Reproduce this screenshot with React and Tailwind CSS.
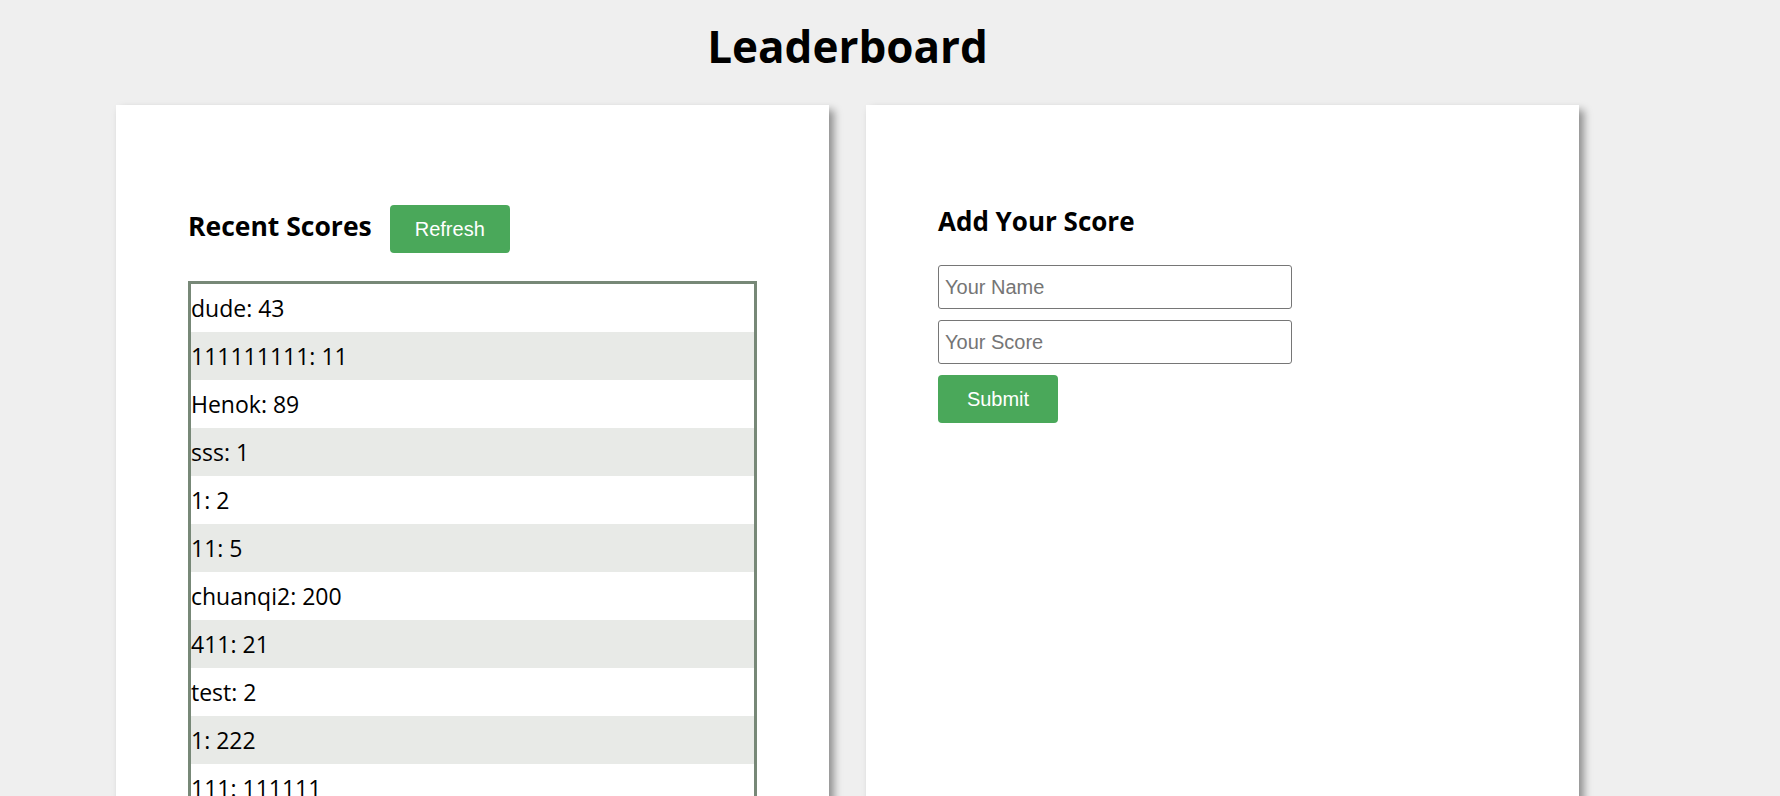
import React from 'react';

const scores = [
    { name: 'dude', score: 43 },
    { name: '111111111', score: 11 },
    { name: 'Henok', score: 89 },
    { name: 'sss', score: 1 },
    { name: '1', score: 2 },
    { name: '11', score: 5 },
    { name: 'chuanqi2', score: 200 },
    { name: '411', score: 21 },
    { name: 'test', score: 2 },
    { name: '1', score: 222 },
    { name: '111', score: 111111 },
];

export default function App() {
    return (
        <div className="min-h-screen bg-[#efefef] text-black font-['Open_Sans',sans-serif] overflow-hidden">
            <div className="ml-[116px] w-[1463px]">
                {/* Title */}
                <h1 className="text-center text-[44px] font-bold leading-[56px] pt-[18px] pb-[31px]">Leaderboard</h1>

                <div className="flex gap-[37px] items-stretch">
                    {/* Recent scores */}
                    <div className="w-[713px] bg-white px-[72px] pt-[100px] pb-10 shadow-[5px_5px_8px_rgba(0,0,0,0.4)]">
                        <div className="flex items-center gap-[18px]">
                            <h2 className="text-[26.5px] font-bold leading-none mb-[5px]">Recent Scores</h2>
                            <button className="h-[48px] w-[120px] rounded-[4px] bg-[#4aa85a] text-white text-[20px] font-['Liberation_Sans',Arial,sans-serif]">
                                Refresh
                            </button>
                        </div>

                        <ul className="mt-[28px] border-[3px] border-[#778877]">
                            {scores.map((s, i) => (
                                <li
                                    key={i}
                                    className={`h-[48px] flex items-center text-[23px] ${i % 2 === 1 ? 'bg-[#e8eae7]' : 'bg-white'}`}
                                >
                                    {s.name}: {s.score}
                                </li>
                            ))}
                        </ul>
                    </div>

                    {/* Add score form */}
                    <div className="w-[713px] bg-white px-[72px] pt-[103px] shadow-[5px_5px_8px_rgba(0,0,0,0.4)]">
                        <h2 className="text-[26px] font-bold leading-none">Add Your Score</h2>
                        <div className="mt-[31px] flex flex-col gap-[11px] items-start font-['Liberation_Sans',Arial,sans-serif]">
                            <input
                                placeholder="Your Name"
                                className="w-[354px] h-[44px] border border-[#767676] rounded-[3px] px-[6px] text-[20px] placeholder:text-[#757575] outline-none"
                            />
                            <input
                                placeholder="Your Score"
                                className="w-[354px] h-[44px] border border-[#767676] rounded-[3px] px-[6px] text-[20px] placeholder:text-[#757575] outline-none"
                            />
                            <button className="h-[48px] w-[120px] rounded-[4px] bg-[#4aa85a] text-white text-[20px]">
                                Submit
                            </button>
                        </div>
                    </div>
                </div>
            </div>
        </div>
    );
}
